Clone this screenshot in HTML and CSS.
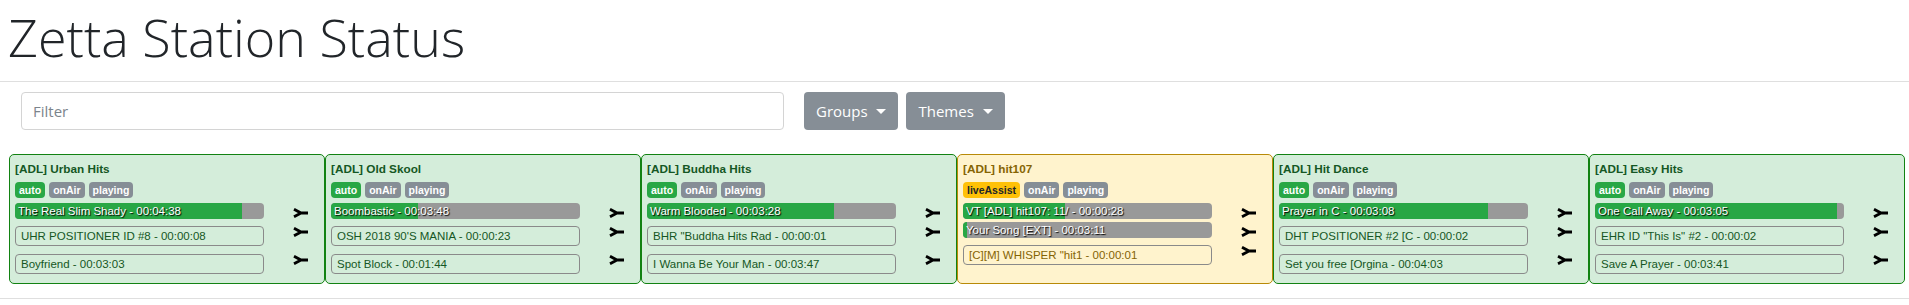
FILE: index.html
```html
<!DOCTYPE html>
<html lang="en">
<head>
    <meta charset="UTF-8">
    <meta name="viewport" content="width=device-width, initial-scale=1.0">
    <title>Zetta Station Status</title>
    <link rel="stylesheet" href="styles.css">
</head>
<body>
    <header id="top">
        <h1 class="page_title">Zetta Station Status</h1>
    </header>
    <hr class="rule">

    <section id="toolbar">
        <input class="filter" type="text" placeholder="Filter">
        <button class="drop_btn">Groups <span class="caret"></span></button>
        <button class="drop_btn">Themes <span class="caret"></span></button>
    </section>

    <section id="stations">

        <div class="station ok">
            <div class="st_name">[ADL] Urban Hits</div>
            <div class="badges">
                <span class="badge b_auto">auto</span><span class="badge b_grey">onAir</span><span class="badge b_grey">playing</span>
            </div>
            <div class="row">
                <div class="bar"><div class="fill" style="width: 91%"></div><span>The Real Slim Shady - 00:04:38</span></div>
                <svg class="arrow" viewBox="0 0 16 10"><path d="M1 1.2 L8 5 L15 5 M1 8.8 L8 5"/></svg>
            </div>
            <div class="row">
                <div class="item">UHR POSITIONER ID #8 - 00:00:08</div>
                <svg class="arrow" viewBox="0 0 16 10"><path d="M1 1.2 L8 5 L15 5 M1 8.8 L8 5"/></svg>
            </div>
            <div class="row">
                <div class="item">Boyfriend - 00:03:03</div>
                <svg class="arrow" viewBox="0 0 16 10"><path d="M1 1.2 L8 5 L15 5 M1 8.8 L8 5"/></svg>
            </div>
        </div>

        <div class="station ok">
            <div class="st_name">[ADL] Old Skool</div>
            <div class="badges">
                <span class="badge b_auto">auto</span><span class="badge b_grey">onAir</span><span class="badge b_grey">playing</span>
            </div>
            <div class="row">
                <div class="bar"><div class="fill" style="width: 35%"></div><span>Boombastic - 00:03:48</span></div>
                <svg class="arrow" viewBox="0 0 16 10"><path d="M1 1.2 L8 5 L15 5 M1 8.8 L8 5"/></svg>
            </div>
            <div class="row">
                <div class="item">OSH 2018 90'S MANIA - 00:00:23</div>
                <svg class="arrow" viewBox="0 0 16 10"><path d="M1 1.2 L8 5 L15 5 M1 8.8 L8 5"/></svg>
            </div>
            <div class="row">
                <div class="item">Spot Block - 00:01:44</div>
                <svg class="arrow" viewBox="0 0 16 10"><path d="M1 1.2 L8 5 L15 5 M1 8.8 L8 5"/></svg>
            </div>
        </div>

        <div class="station ok">
            <div class="st_name">[ADL] Buddha Hits</div>
            <div class="badges">
                <span class="badge b_auto">auto</span><span class="badge b_grey">onAir</span><span class="badge b_grey">playing</span>
            </div>
            <div class="row">
                <div class="bar"><div class="fill" style="width: 75%"></div><span>Warm Blooded - 00:03:28</span></div>
                <svg class="arrow" viewBox="0 0 16 10"><path d="M1 1.2 L8 5 L15 5 M1 8.8 L8 5"/></svg>
            </div>
            <div class="row">
                <div class="item">BHR "Buddha Hits Rad - 00:00:01</div>
                <svg class="arrow" viewBox="0 0 16 10"><path d="M1 1.2 L8 5 L15 5 M1 8.8 L8 5"/></svg>
            </div>
            <div class="row">
                <div class="item">I Wanna Be Your Man - 00:03:47</div>
                <svg class="arrow" viewBox="0 0 16 10"><path d="M1 1.2 L8 5 L15 5 M1 8.8 L8 5"/></svg>
            </div>
        </div>

        <div class="station live">
            <div class="st_name">[ADL] hit107</div>
            <div class="badges">
                <span class="badge b_live">liveAssist</span><span class="badge b_grey">onAir</span><span class="badge b_grey">playing</span>
            </div>
            <div class="row">
                <div class="bar"><div class="fill" style="width: 41%"></div><span>VT [ADL] hit107: 11/ - 00:00:28</span></div>
                <svg class="arrow" viewBox="0 0 16 10"><path d="M1 1.2 L8 5 L15 5 M1 8.8 L8 5"/></svg>
            </div>
            <div class="row">
                <div class="bar"><div class="fill" style="width: 1.5%"></div><span>Your Song [EXT] - 00:03:11</span></div>
                <svg class="arrow" viewBox="0 0 16 10"><path d="M1 1.2 L8 5 L15 5 M1 8.8 L8 5"/></svg>
            </div>
            <div class="row">
                <div class="item">[C][M] WHISPER "hit1 - 00:00:01</div>
                <svg class="arrow" viewBox="0 0 16 10"><path d="M1 1.2 L8 5 L15 5 M1 8.8 L8 5"/></svg>
            </div>
        </div>

        <div class="station ok">
            <div class="st_name">[ADL] Hit Dance</div>
            <div class="badges">
                <span class="badge b_auto">auto</span><span class="badge b_grey">onAir</span><span class="badge b_grey">playing</span>
            </div>
            <div class="row">
                <div class="bar"><div class="fill" style="width: 84%"></div><span>Prayer in C - 00:03:08</span></div>
                <svg class="arrow" viewBox="0 0 16 10"><path d="M1 1.2 L8 5 L15 5 M1 8.8 L8 5"/></svg>
            </div>
            <div class="row">
                <div class="item">DHT POSITIONER #2 [C - 00:00:02</div>
                <svg class="arrow" viewBox="0 0 16 10"><path d="M1 1.2 L8 5 L15 5 M1 8.8 L8 5"/></svg>
            </div>
            <div class="row">
                <div class="item">Set you free [Orgina - 00:04:03</div>
                <svg class="arrow" viewBox="0 0 16 10"><path d="M1 1.2 L8 5 L15 5 M1 8.8 L8 5"/></svg>
            </div>
        </div>

        <div class="station ok">
            <div class="st_name">[ADL] Easy Hits</div>
            <div class="badges">
                <span class="badge b_auto">auto</span><span class="badge b_grey">onAir</span><span class="badge b_grey">playing</span>
            </div>
            <div class="row">
                <div class="bar"><div class="fill" style="width: 97%"></div><span>One Call Away - 00:03:05</span></div>
                <svg class="arrow" viewBox="0 0 16 10"><path d="M1 1.2 L8 5 L15 5 M1 8.8 L8 5"/></svg>
            </div>
            <div class="row">
                <div class="item">EHR ID "This Is" #2 - 00:00:02</div>
                <svg class="arrow" viewBox="0 0 16 10"><path d="M1 1.2 L8 5 L15 5 M1 8.8 L8 5"/></svg>
            </div>
            <div class="row">
                <div class="item">Save A Prayer - 00:03:41</div>
                <svg class="arrow" viewBox="0 0 16 10"><path d="M1 1.2 L8 5 L15 5 M1 8.8 L8 5"/></svg>
            </div>
        </div>

    </section>
    <hr class="rule">
</body>
</html>
```

FILE: styles.css
```css
body{
    margin: 0;
    background: #fff;
    font-family: "Open Sans", "Liberation Sans", sans-serif;
    color: #212529;
}
#top{
    padding: 0 8px;
    height: 81px;
}
.page_title{
    margin: 0;
    padding-top: 2px;
    font-size: 52px;
    font-weight: 300;
    line-height: 70px;
    color: #212529;
}
.rule{
    margin: 0;
    border: 0;
    border-top: 1px solid #dfdfdf;
}

#toolbar{
    display: flex;
    align-items: center;
    padding: 10px 0 0 21px;
    gap: 8px;
}
.filter{
    box-sizing: border-box;
    width: 763px;
    height: 38px;
    margin-right: 12px;
    padding: 6px 11px;
    font-family: "Open Sans", sans-serif;
    font-size: 15px;
    color: #495057;
    border: 1px solid #d4d4d4;
    border-radius: 4px;
    outline: none;
}
.filter::placeholder{
    color: #7b848c;
}
.drop_btn{
    height: 38px;
    padding: 0 12px;
    background: #868e96;
    color: #fff;
    border: none;
    border-radius: 4px;
    font-family: "Open Sans", sans-serif;
    font-size: 15px;
    cursor: pointer;
}
.caret{
    display: inline-block;
    margin-left: 5px;
    vertical-align: 3px;
    border-top: 5px solid #fff;
    border-left: 5px solid transparent;
    border-right: 5px solid transparent;
}

#stations{
    display: flex;
    padding: 24px 0 14px 9px;
}
.station{
    box-sizing: border-box;
    width: 316px;
    padding: 4px 5px 5px 5px;
    border: 1px solid #128212;
    border-radius: 5px;
    background: #d4edda;
    color: #155724;
    font-family: "Liberation Sans", sans-serif;
}
.station.live{
    background: #fff3cd;
    color: #856404;
    border-color: #b88a08;
}
.st_name{
    font-size: 11.75px;
    font-weight: bold;
    line-height: 20px;
}
.badges{
    display: flex;
    gap: 4px;
    margin: 3px 0 5px;
}
.badge{
    display: inline-block;
    padding: 0 4px;
    height: 16px;
    line-height: 16px;
    font-size: 10.5px;
    font-weight: bold;
    color: #fff;
    border-radius: 4px;
}
.b_auto{
    background: #28a745;
}
.b_grey{
    background: #868e96;
}
.b_live{
    background: #ffc107;
    color: #212529;
}

.row{
    display: flex;
    align-items: flex-start;
}
.bar{
    position: relative;
    box-sizing: border-box;
    width: 249px;
    height: 16px;
    margin-bottom: 3px;
    background: #999;
    border-radius: 4px;
    overflow: hidden;
}
.fill{
    height: 100%;
    background: #28a745;
}
.bar span{
    position: absolute;
    left: 3px;
    top: 0;
    line-height: 16px;
    font-size: 11.5px;
    color: #fff;
    white-space: nowrap;
    text-shadow: 1px 1px 1px #000;
}
.item{
    box-sizing: border-box;
    width: 249px;
    height: 20px;
    margin: 4px 0;
    padding-left: 5px;
    line-height: 18px;
    font-size: 11.5px;
    border: 1px solid #8a8a8a;
    border-radius: 4px;
    white-space: nowrap;
}
.arrow{
    width: 16px;
    height: 10px;
    margin: 5px 0 0 29px;
    fill: none;
    stroke: #000;
    stroke-width: 2.8;
}
```
